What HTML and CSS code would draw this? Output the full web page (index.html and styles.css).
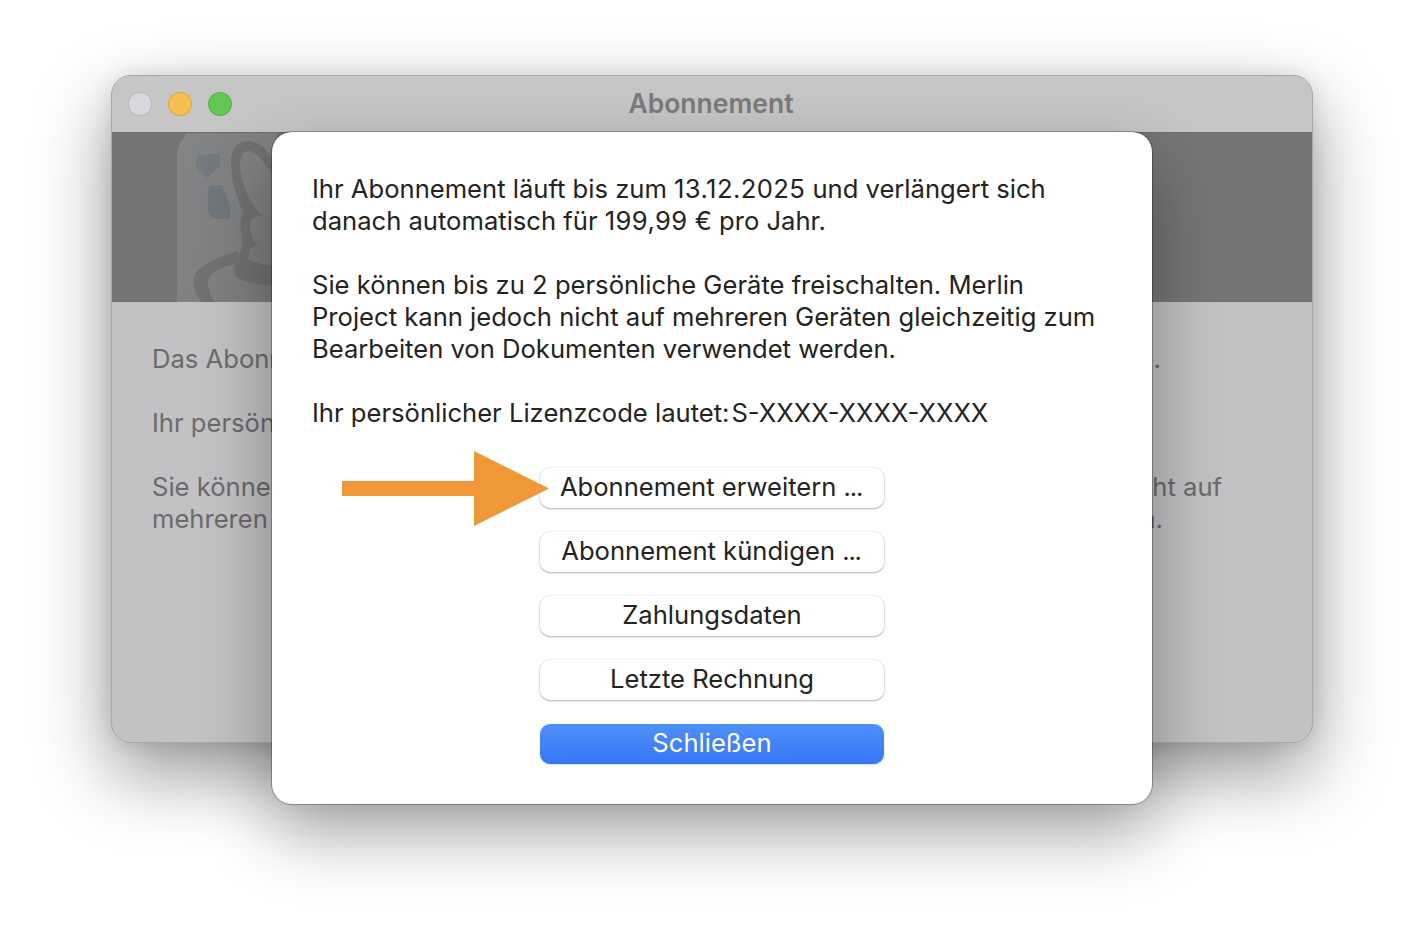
FILE: index.html
```html
<!DOCTYPE html>
<html lang="de">
<head>
<meta charset="utf-8">
<title>Abonnement</title>
<link rel="stylesheet" href="styles.css">
</head>
<body>
<main class="stage">
  <section class="window">
    <header class="titlebar">
      <div class="lights">
        <span class="light light-close"></span>
        <span class="light light-min"></span>
        <span class="light light-max"></span>
      </div>
      <h1 class="title">Abonnement</h1>
    </header>
    <div class="banner">
      <svg class="app-icon" viewBox="177 133 100 169" width="100" height="169" aria-hidden="true">
        <defs>
          <linearGradient id="tile" x1="0" y1="0" x2="1" y2="0.5">
            <stop offset="0" stop-color="#828486"/>
            <stop offset="1" stop-color="#7a7a7a"/>
          </linearGradient>
        </defs>
        <rect x="177" y="125" width="200" height="240" rx="32" fill="url(#tile)"/>
        <path d="M197 156 L218 153 Q220 153 220 156 L220 166 L207 178 L198 169 Q196 167 196 164 Z" fill="#737a7f"/>
        <path d="M212 185 L222 185 L231 208 L229 219 L215 219 Q208 216 208 209 L208 190 Q208 185 212 185 Z" fill="#6f777d"/>
        <path d="M238 251 C215 258 193 268 193 281 C193 290 198 297 202 302 L215 302 C210 295 208 288 208 281 C208 274 220 267 236 264 Z" fill="#717171"/>
        <path d="M285 180 C272 152 260 141 248 141 C236 141 230 152 231 165 C232 185 238 200 243 212 C240 220 240 228 241 232 C242 240 244 246 240 252 C236 260 234 266 234 272 C234 280 250 285 285 287 L285 266 L272 265 C262 265 250 262 248 258 L250 248 L258 245 C252 240 250 232 250 226 C250 220 252 216 262 216 C250 205 240 180 240 165 C240 155 244 151 248 151 C258 151 268 165 285 200 Z" fill="#717171"/>
      </svg>
    </div>
    <div class="body">
      <p class="line"><span>Das Abonne</span><span class="tail tail-a">en.</span></p>
      <p class="line"><span>Ihr persönli</span></p>
      <p class="line"><span>Sie können</span><span class="tail tail-b">nicht auf</span></p>
      <p class="line line-tight"><span>mehreren</span><span class="tail tail-c">en.</span></p>
    </div>
  </section>

  <section class="sheet">
    <p class="copy">Ihr Abonnement läuft bis zum <span class="date">13.12.2025</span> und verlängert sich<br>danach automatisch für <span class="date">199,99</span> € pro Jahr.</p>
    <p class="copy">Sie können bis zu 2 persönliche Geräte freischalten. Merlin<br>Project kann jedoch nicht auf mehreren Geräten gleichzeitig zum<br>Bearbeiten von Dokumenten verwendet werden.</p>
    <p class="copy license"><span>Ihr persönlicher Lizenzcode lautet:</span><span>S-XXXX-XXXX-XXXX</span></p>
    <div class="actions">
      <svg class="arrow" viewBox="0 0 207 75" width="207" height="75" aria-hidden="true">
        <path d="M0 30 H132 V0 L207 37.5 L132 75 V45 H0 Z" fill="#f09837"/>
      </svg>
      <button class="btn">Abonnement erweitern <span class="dots">...</span></button>
      <button class="btn">Abonnement kündigen <span class="dots">...</span></button>
      <button class="btn">Zahlungsdaten</button>
      <button class="btn">Letzte Rechnung</button>
      <button class="btn btn-primary">Schließen</button>
    </div>
  </section>
</main>
</body>
</html>
```

FILE: styles.css
```css
* { box-sizing: border-box; }
html, body { margin: 0; height: 100%; }
body {
  background: #fff;
  font-family: Inter, "Noto Sans", "Liberation Sans", sans-serif;
  overflow: hidden;
}
.stage {
  position: relative;
  width: 1424px;
  height: 952px;
  padding: 75px 111px 0;
}
.window {
  position: relative;
  width: 1202px;
  height: 668px;
  border-radius: 20px;
  overflow: hidden;
  background: #c2c2c4;
  border: 1px solid #a9a9a9;
  box-shadow: 0 30px 75px rgba(0, 0, 0, .42), 0 0 20px rgba(0, 0, 0, .10);
}
.titlebar {
  height: 56px;
  padding-bottom: 2px;
  background: #c6c6c6;
  display: flex;
  align-items: center;
  justify-content: center;
  position: relative;
}
.lights {
  position: absolute;
  left: 16px;
  top: 16px;
  display: flex;
  gap: 16px;
}
.light {
  width: 24px;
  height: 24px;
  border-radius: 50%;
  border: 1px solid rgba(0, 0, 0, .12);
}
.light-close { background: #d6d6dc; }
.light-min { background: #f5bf4f; }
.light-max { background: #62c655; }
.title {
  margin: 0 2px 0 0;
  font-size: 26.5px;
  font-weight: 600;
  color: #7a7a7a;
  line-height: 54px;
}
.banner {
  height: 170px;
  background: #757575;
  border-top: 1px solid #6a6a6a;
  overflow: hidden;
  padding-left: 65px;
}
.app-icon { display: block; }
.body {
  padding: 41px 0 0 40px;
  font-size: 25.6px;
  line-height: 32px;
  color: #6a6a6a;
}
.line {
  margin: 0 0 32px;
  display: flex;
  justify-content: space-between;
}
.line-tight { margin-top: -32px; }
.tail { display: block; white-space: nowrap; }
.tail-a { margin-right: 151px; }
.tail-b { margin-right: 90px; }
.tail-c { margin-right: 149px; }
.sheet {
  position: absolute;
  left: 272px;
  top: 132px;
  width: 880px;
  height: 672px;
  background: #fff;
  border-radius: 20px;
  padding: 41px 40px 0;
  box-shadow: 0 0 0 1px rgba(0, 0, 0, .28), 0 30px 70px rgba(0, 0, 0, .33);
}
.copy {
  margin: 0 0 32px;
  font-size: 25.6px;
  line-height: 32px;
  color: #232323;
  white-space: nowrap;
}
.date { letter-spacing: .4px; }
.license { display: flex; gap: 2px; margin-bottom: 39px; }
.actions {
  position: relative;
  display: flex;
  flex-direction: column;
  align-items: center;
  gap: 24px;
}
.arrow {
  position: absolute;
  left: 30px;
  top: -17px;
  z-index: 2;
}
.btn {
  width: 344px;
  height: 40px;
  margin: 0;
  padding: 0 0 2px;
  border: 0;
  border-radius: 10px;
  background: #fff;
  color: #232323;
  font: inherit;
  font-size: 25.6px;
  line-height: 38px;
  box-shadow: 0 0 0 1px rgba(0, 0, 0, .05), 0 1px 2px rgba(0, 0, 0, .28);
}
.dots { letter-spacing: -1.2px; margin-right: 2px; }
.btn-primary {
  color: #fff;
  background: linear-gradient(#4e90f9, #3576f6);
  box-shadow: 0 1px 2px rgba(40, 100, 240, .2);
}
```
